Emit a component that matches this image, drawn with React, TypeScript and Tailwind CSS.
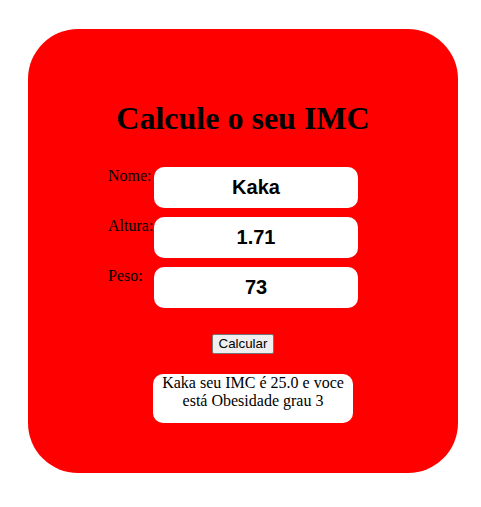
import React from "react";

const serif = { fontFamily: '"Liberation Serif", "Times New Roman", serif' };

function Row({ label, value }: { label: string; value: string }) {
  return (
    <div className="flex items-start">
      <label className="w-[46px] text-[16px] leading-[17.7px] text-black" style={serif}>
        {label}
      </label>
      <input
        readOnly
        value={value}
        className="w-[204px] h-[41px] rounded-[10px] bg-white text-center text-[20px] font-bold text-black outline-none font-['Liberation_Sans',Arial,sans-serif]"
      />
    </div>
  );
}

export default function App() {
  return (
    <div className="w-[481px] h-[507px] bg-white pt-[29px] pl-[28px]">
      <div className="w-[430px] h-[444px] rounded-[50px] bg-[#ff0000] flex flex-col pt-[71px]">
        <h1
          className="text-center text-[32px] font-bold leading-[36px] text-black"
          style={serif}
        >
          Calcule o seu IMC
        </h1>
        <div className="mt-[31px] ml-[80px] flex flex-col gap-[9px]">
          <Row label="Nome:" value="Kaka" />
          <Row label="Altura:" value="1.71" />
          <Row label="Peso:" value="73" />
        </div>
        <div className="mt-[26px] flex justify-center">
          <button className="h-[20px] px-[6px] bg-[#efefef] border border-[#767676] rounded-[2px] text-[13.33px] leading-[16px] text-black font-['Liberation_Sans',Arial,sans-serif]">
            Calcular
          </button>
        </div>
        <div
          className="mt-[20px] ml-[125px] w-[200px] h-[49px] rounded-[10px] bg-white text-center text-[16px] leading-[17.7px] text-black"
          style={serif}
        >
          Kaka seu IMC é 25.0 e voce está Obesidade grau 3
        </div>
      </div>
    </div>
  );
}
